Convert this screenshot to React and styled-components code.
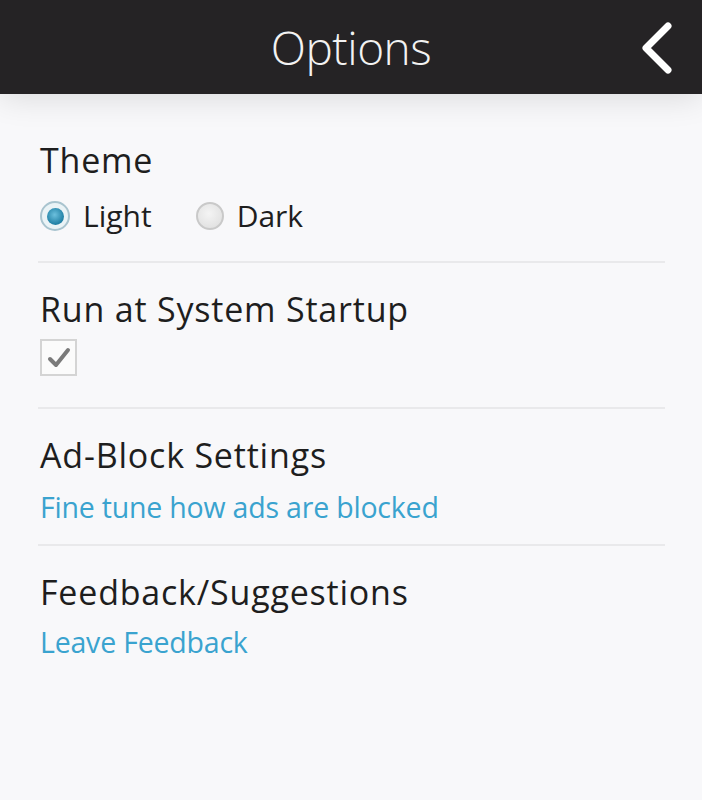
import { useState } from "react";
import styled, { createGlobalStyle } from "styled-components";

const GlobalStyle = createGlobalStyle`
  html, body {
    margin: 0;
    padding: 0;
    background: #f8f8fa;
  }
  body {
    font-family: 'Open Sans', 'Noto Sans', sans-serif;
  }
`;

const Page = styled.div`
  width: 702px;
  height: 800px;
  background: #f8f8fa;
  overflow: hidden;
`;

const Header = styled.div`
  height: 94px;
  background: #252325;
  display: flex;
  align-items: center;
  justify-content: center;
  position: relative;
  box-shadow: 0 4px 30px rgba(0, 0, 0, 0.12);
`;

const Title = styled.h1`
  margin: 0;
  font-size: 46px;
  font-weight: 300;
  color: #f2f2f2;
  letter-spacing: -0.5px;
`;

const BackButton = styled.button`
  position: absolute;
  right: 24px;
  top: 20px;
  width: 40px;
  height: 56px;
  padding: 0;
  border: none;
  background: none;
  cursor: pointer;
`;

const Content = styled.div`
  padding: 44px 37px 0 38px;
`;

const Section = styled.div`
  padding: 0 0 ${p => p.$pad || 0}px 2px;
  border-bottom: ${p => (p.$last ? "none" : "2px solid #e9e9eb")};
  margin-bottom: 24px;
`;

const Heading = styled.div`
  font-size: 34px;
  color: #1e1e1e;
  line-height: 44px;
  letter-spacing: 0.8px;
`;

const RadioRow = styled.div`
  display: flex;
  gap: 44px;
  margin-top: 12px;
`;

const RadioLabel = styled.label`
  display: flex;
  align-items: center;
  gap: 13px;
  font-size: 30px;
  color: #1e1e1e;
  line-height: 44px;
  cursor: pointer;
`;

const RadioDot = styled.span`
  width: ${p => (p.$on ? 26 : 24)}px;
  height: ${p => (p.$on ? 26 : 24)}px;
  border-radius: 50%;
  border: 2px solid ${p => (p.$on ? "#a9c4cf" : "#c9c9c9")};
  background: ${p => (p.$on ? "#eaf3f6" : "radial-gradient(circle at 45% 40%, #f4f4f4, #dcdcdc)")};
  display: flex;
  align-items: center;
  justify-content: center;
  &::after {
    content: "";
    display: ${p => (p.$on ? "block" : "none")};
    width: 17px;
    height: 17px;
    border-radius: 50%;
    background: radial-gradient(circle at 45% 40%, #6cc0dd, #1f7fa4 70%, #15607f);
  }
`;

const CheckBox = styled.span`
  display: flex;
  align-items: center;
  justify-content: center;
  width: 37px;
  height: 37px;
  margin-top: 8px;
  border: 2px solid #d4d4d4;
  background: #fbfbfb;
  box-sizing: border-box;
  cursor: pointer;
`;

const Link = styled.a`
  display: block;
  font-size: 28.5px;
  color: #3aa3cf;
  line-height: 40px;
  margin-top: ${p => p.$gap || 10}px;
  text-decoration: none;
  letter-spacing: -0.2px;
  cursor: pointer;
`;

export default function App() {
  const [theme, setTheme] = useState("light");
  const [startup, setStartup] = useState(true);

  return (
    <Page>
      <GlobalStyle />
      <Header>
        <Title>Options</Title>
        <BackButton aria-label="Back">
          <svg width="40" height="56" viewBox="0 0 40 56">
            <path d="M30 6 L8 28 L30 50" fill="none" stroke="#ffffff" strokeWidth="7" strokeLinecap="round" strokeLinejoin="round" />
          </svg>
        </BackButton>
      </Header>
      <Content>
        <Section $pad={23}>
          <Heading>Theme</Heading>
          <RadioRow>
            <RadioLabel onClick={() => setTheme("light")}>
              <RadioDot $on={theme === "light"} />
              Light
            </RadioLabel>
            <RadioLabel onClick={() => setTheme("dark")}>
              <RadioDot $on={theme === "dark"} />
              Dark
            </RadioLabel>
          </RadioRow>
        </Section>
        <Section $pad={31}>
          <Heading>Run at System Startup</Heading>
          <CheckBox onClick={() => setStartup(!startup)}>
            {startup && (
              <svg width="26" height="24" viewBox="0 0 26 24">
                <path d="M4 13 L10 19 L22 4" fill="none" stroke="#7a7a7a" strokeWidth="4" strokeLinecap="round" strokeLinejoin="round" />
              </svg>
            )}
          </CheckBox>
        </Section>
        <Section $pad={17}>
          <Heading>Ad-Block Settings</Heading>
          <Link>Fine tune how ads are blocked</Link>
        </Section>
        <Section $last>
          <Heading>Feedback/Suggestions</Heading>
          <Link $gap={8}>Leave Feedback</Link>
        </Section>
      </Content>
    </Page>
  );
}
